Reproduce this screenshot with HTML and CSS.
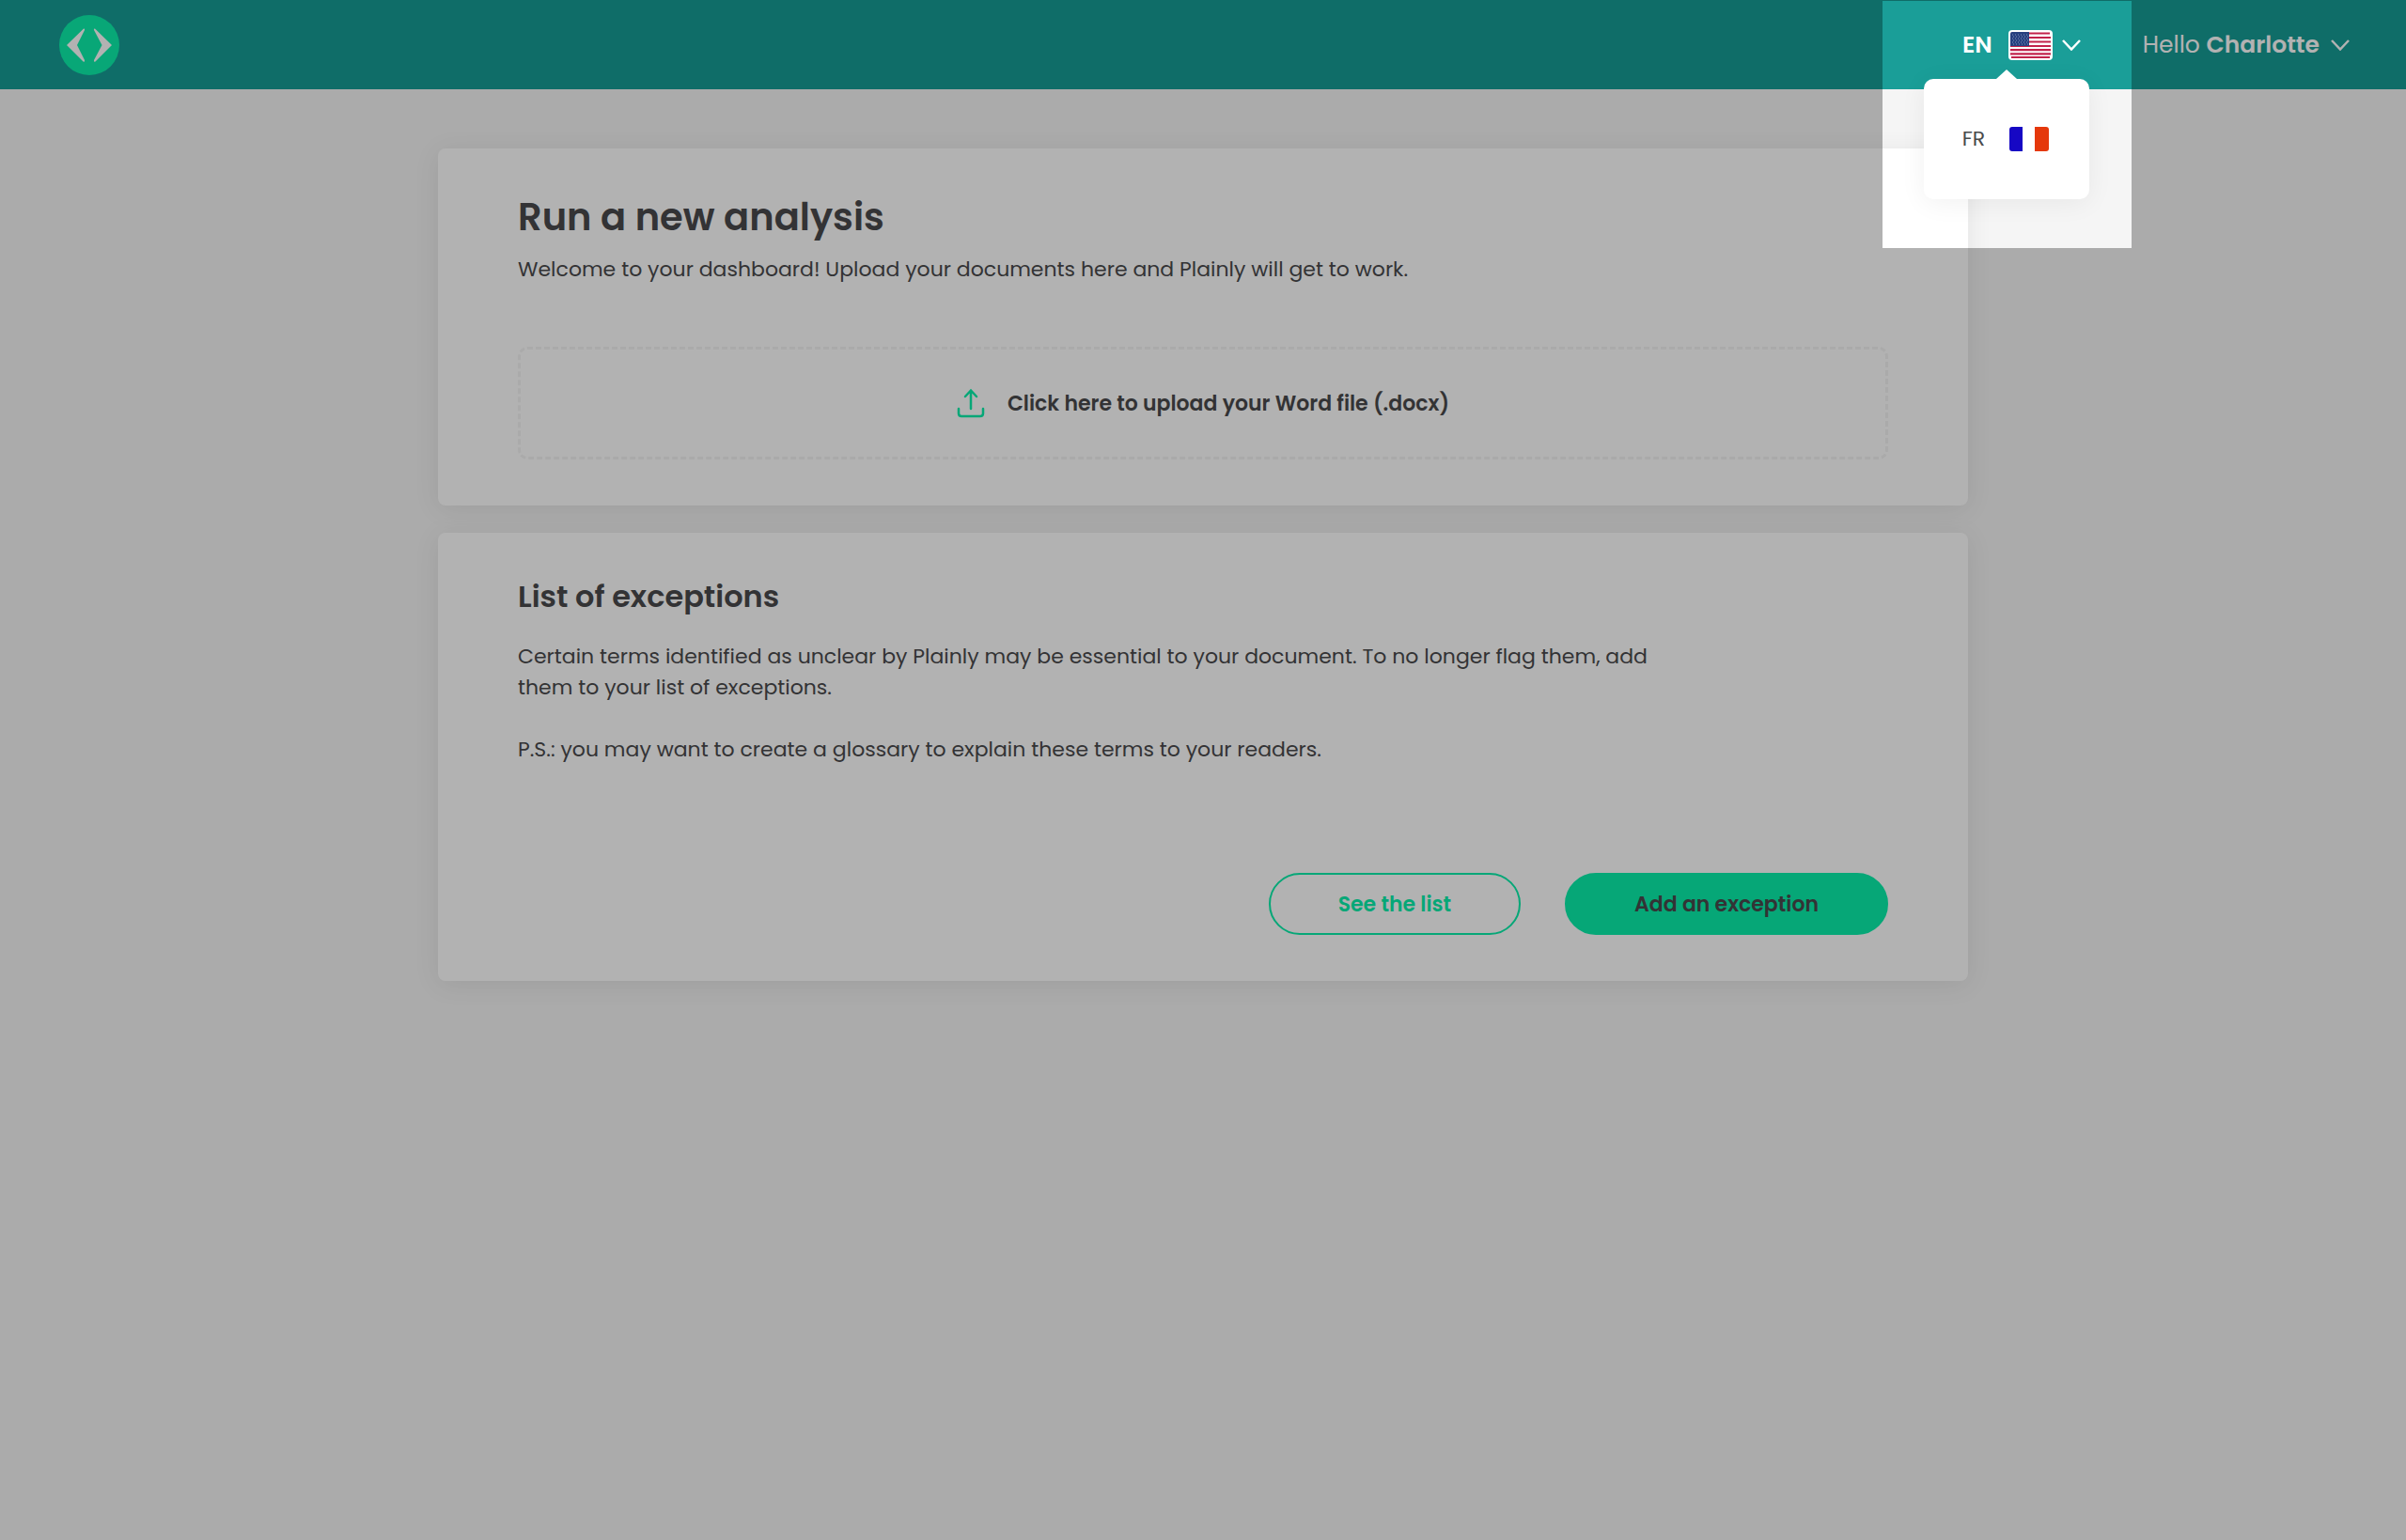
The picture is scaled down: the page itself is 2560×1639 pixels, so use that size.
FILE: index.html
```html
<!DOCTYPE html>
<html lang="en">
<head>
  <meta charset="UTF-8" />
  <meta name="viewport" content="width=device-width, initial-scale=1.0"/>
  <title>Plainly - Dashboard</title>
  <link rel="stylesheet" href="styles.css">
</head>
<body>

<header class="navbar">
  <a href="#" class="logo" aria-label="Plainly">
    <svg viewBox="0 0 64 64" width="64" height="64">
      <circle cx="32" cy="32" r="32" fill="#0cefab"/>
      <path d="M26 14.500Q27.500 14 27 16L19 32L27 48Q27.500 50.500 25.500 49.500L8 32Z" fill="#fff"/>
      <path d="M38 14.500Q36.500 14 37 16L45.500 32L37 48Q36.500 50.500 38.500 49.500L56 32Z" fill="#fff"/>
    </svg>
  </a>

  <nav class="nav-right">
    <!-- LANGUAGE -->
    <div class="lang">
      <div class="spotlight"></div>
      <button type="button" class="lang-button" aria-expanded="true">
        <span class="lang-code">EN</span>
        <svg class="flag-us" viewBox="0 0 47 32" width="47" height="32">
          <rect width="47" height="32" rx="4" fill="#fff"/>
          <path d="M3 3.500H44M2 8H45M2 12.500H45M2 17H45M2 21.200H45M2 25.400H45M3 29H44" stroke="#c1224b" stroke-width="2.200"/>
          <path d="M4 2H22V17H2V4Q2 2 4 2Z" fill="#27407f"/>
          <path d="M4 5H21M4 9H21M4 13H21" stroke="#8192bd" stroke-width="1" stroke-dasharray="1 2"/>
          <path d="M5 7H21M5 11H21M5 15H21" stroke="#8192bd" stroke-width="1" stroke-dasharray="1 2"/>
        </svg>
        <svg class="chevron" viewBox="0 0 20 12" width="20" height="12">
          <path d="M1 1L10 10.500L19 1"/>
        </svg>
      </button>
      <div class="lang-menu">
        <a href="#" class="lang-option">
          <span>FR</span>
          <svg viewBox="0 0 42 26" width="42" height="26">
            <path d="M3 0H14V26H3Q0 26 0 23V3Q0 0 3 0Z" fill="#1607c4"/>
            <path d="M27 0H39Q42 0 42 3V23Q42 26 39 26H27Z" fill="#e5380b"/>
          </svg>
        </a>
      </div>
    </div>

    <!-- USER -->
    <button type="button" class="user-button">
      <span>Hello <b>Charlotte</b></span>
      <svg class="chevron" viewBox="0 0 20 12" width="20" height="12">
        <path d="M1 1L10 10.500L19 1"/>
      </svg>
    </button>
  </nav>
</header>

<main class="dashboard">
  <section class="card">
    <h1>Run a new analysis</h1>
    <p class="intro">Welcome to your dashboard! Upload your documents here and Plainly will get to work.</p>
    <label class="upload" for="wordFile">
      <input type="file" id="wordFile" accept=".docx" />
      <svg viewBox="0 0 30 32" width="30" height="32">
        <path d="M15 22V3M9 9L15 2.500L21 9M2 22V27Q2 30 5 30H25Q28 30 28 27V22"/>
      </svg>
      <span>Click here to upload your Word file (.docx)</span>
    </label>
  </section>

  <section class="card">
    <h2>List of exceptions</h2>
    <div class="description">
      <p>Certain terms identified as unclear by Plainly may be essential to your document. To no longer flag them, add them to your list of exceptions.</p>
      <p>P.S.: you may want to create a glossary to explain these terms to your readers.</p>
    </div>
    <div class="actions">
      <button type="button" class="btn btn-outline">See the list</button>
      <button type="button" class="btn btn-primary">Add an exception</button>
    </div>
  </section>
</main>

</body>
</html>
```
FILE: styles.css
```css
* {
  box-sizing: border-box;
}

body {
  margin: 0;
  min-height: 100vh;
  background: #f5f5f5;
  color: #4a4a4c;
  font-family: Poppins, Inter, sans-serif;
  font-size: 22px;
  line-height: 33px;
}

button {
  font: inherit;
  cursor: pointer;
}

h1, h2, p {
  margin: 0;
}

/* NAVBAR */
.navbar {
  display: flex;
  justify-content: space-between;
  align-items: center;
  height: 95px;
  padding: 0 60px 0 63px;
  background: #169d96;
}

.logo svg {
  display: block;
}

.nav-right {
  display: flex;
  gap: 66px;
}

.lang {
  position: relative;
}

.lang-button, .user-button {
  display: flex;
  align-items: center;
  height: 95px;
  padding: 0;
  border: none;
  background: none;
  color: #fff;
  font-size: 25px;
  white-space: nowrap;
}

.user-button {
  gap: 12px;
}

.user-button b {
  font-weight: 600;
}

.lang-code {
  font-weight: 600;
}

.flag-us {
  margin-left: 17px;
  margin-right: 10px;
}

.lang-button, .lang-menu {
  position: relative;
  z-index: 2;
}

.chevron {
  fill: none;
  stroke: #fff;
  stroke-width: 2.5;
}

/* the huge shadow dims everything outside the language menu */
.spotlight {
  position: absolute;
  z-index: 1;
  top: 1px;
  right: -54px;
  width: 265px;
  height: 263px;
  box-shadow: 0 0 0 4000px rgba(0, 0, 0, 0.3);
  background: rgba(255, 255, 255, 0.02);
  pointer-events: none;
}

.lang-menu {
  position: absolute;
  top: 84px;
  right: -9px;
  width: 176px;
  padding: 48px 43px 48px 41px;
  border-radius: 10px;
  background: #fff;
  box-shadow: 0 4px 28px rgba(0, 0, 0, 0.06);
}

.lang-menu::before {
  content: "";
  position: absolute;
  top: -10px;
  left: 77px;
  border: solid transparent;
  border-width: 0 11px 10px;
  border-bottom-color: #fff;
}

.lang-option {
  display: flex;
  justify-content: space-between;
  align-items: center;
  color: #4a4a4c;
  line-height: 32px;
  text-decoration: none;
}

/* CARDS */
.dashboard {
  display: flex;
  flex-direction: column;
  gap: 29px;
  width: calc(100% - 64px);
  max-width: 1628px;
  margin: 63px auto;
}

.card {
  padding: 48px 85px 49px;
  border-radius: 8px;
  background: #fff;
  box-shadow: 0 4px 28px rgba(0, 0, 0, 0.08);
}

h1 {
  font-size: 40px;
  font-weight: 600;
  line-height: 50px;
}

h2 {
  font-size: 32px;
  font-weight: 600;
  line-height: 40px;
}

.intro {
  margin-top: 14px;
}

.upload {
  display: flex;
  justify-content: center;
  align-items: center;
  gap: 24px;
  height: 120px;
  margin-top: 66px;
  border: 3px dashed #f4f4f4;
  border-radius: 10px;
  font-weight: 600;
  cursor: pointer;
}

.upload input {
  position: absolute;
  opacity: 0;
  width: 1px;
  height: 1px;
}

.upload svg {
  fill: none;
  stroke: #09efab;
  stroke-width: 2.5;
  stroke-linecap: round;
}

.description {
  display: flex;
  flex-direction: column;
  gap: 33px;
  max-width: 1240px;
  margin-top: 27px;
}

.actions {
  display: flex;
  justify-content: flex-end;
  gap: 47px;
  margin-top: 115px;
}

.btn {
  height: 66px;
  padding: 0 72px;
  border: 2px solid #09efab;
  border-radius: 33px;
  color: #4a4a4c;
  font-weight: 600;
}

.btn-outline {
  background: none;
  color: #09efab;
}

.btn-primary {
  background: #09efab;
}

@media (max-width: 768px) {
  .card {
    padding: 32px;
  }

  .actions {
    flex-direction: column;
  }
}
```
